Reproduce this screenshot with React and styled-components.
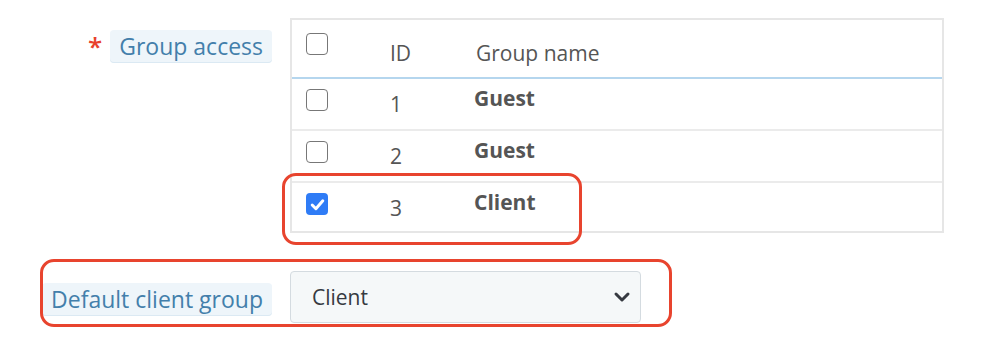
import React from "react";
import styled, { createGlobalStyle } from "styled-components";

const Global = createGlobalStyle`
  html, body { margin: 0; padding: 0; background: #ffffff; }
  body { font-family: "Open Sans", "Liberation Sans", sans-serif; }
  * { box-sizing: border-box; }
`;

const Page = styled.div`
  position: relative;
  width: 1000px;
  height: 345px;
  padding-top: 18px;
  overflow: hidden;
`;

const FormRow = styled.div`
  display: flex;
  gap: 18px;
  align-items: ${(p) => (p.$center ? "center" : "flex-start")};
  margin-top: ${(p) => p.$mt || 0}px;
`;

const LabelCol = styled.div`
  width: 272px;
  flex: none;
  display: flex;
  justify-content: flex-end;
  align-items: center;
  gap: 8px;
  padding-top: ${(p) => p.$pt || 0}px;
`;

const Required = styled.span`
  color: #e8412c;
  font-size: 26px;
  font-weight: 600;
  line-height: 26px;
  height: 22px;
  margin-top: -6px;
`;

const Label = styled.span`
  display: inline-block;
  height: 33px;
  line-height: 33px;
  padding: 0 9px;
  font-size: 23px;
  color: #437fab;
  background: #eef5fa;
  border-radius: 4px;
  box-shadow: inset 0 -1px 0 #dbe9f3;
  white-space: nowrap;
`;

const Table = styled.div`
  width: 654px;
  border: 2px solid #e6e6e6;
  background: #fff;
`;

const Row = styled.div`
  display: grid;
  grid-template-columns: 84px 84px 1fr;
  height: ${(p) => (p.$head ? 57 : p.$last ? 48 : 50)}px;
  border-bottom: ${(p) => (p.$last ? "none" : `2px solid ${p.$head ? "#b5d6ee" : "#ebebeb"}`)};
  box-sizing: content-box;
`;

const Cell = styled.div`
  padding-left: ${(p) => p.$pl || 14}px;
  padding-top: ${(p) => p.$pt}px;
  font-size: 21px;
  line-height: 29px;
  color: #555;
  font-weight: ${(p) => (p.$bold ? 700 : 400)};
  white-space: nowrap;
`;

const Box = styled.span`
  width: 22px;
  height: 22px;
  border-radius: 4px;
  border: ${(p) => (p.$checked ? "none" : "1.6px solid #777")};
  background: ${(p) => (p.$checked ? "#2f7cf6" : "#fff")};
  display: flex;
  align-items: center;
  justify-content: center;
`;

const Select = styled.div`
  width: 351px;
  height: 52px;
  border: 1px solid #d4dbe0;
  border-radius: 4px;
  background: #f5f8f9;
  display: flex;
  align-items: center;
  justify-content: space-between;
  padding: 0 8px 0 21px;
  font-size: 21px;
  color: #363a41;
`;

const Annot = styled.div`
  position: absolute;
  border: 3px solid #e8442e;
  border-radius: 14px;
  pointer-events: none;
`;

function Checkbox({ checked }) {
  return (
    <Box $checked={checked}>
      {checked && (
        <svg width="17" height="17" viewBox="0 0 16 16">
          <path d="M3 8.5 L6.5 12 L13 4.5" fill="none" stroke="#fff" strokeWidth="2.8" strokeLinecap="round" strokeLinejoin="round" />
        </svg>
      )}
    </Box>
  );
}

const rows = [
  { id: 1, name: "Guest", checked: false },
  { id: 2, name: "Guest", checked: false },
  { id: 3, name: "Client", checked: true },
];

export default function App() {
  return (
    <>
      <Global />
      <Page>
        <FormRow>
          <LabelCol $pt={12}>
            <Required>*</Required>
            <Label>Group access</Label>
          </LabelCol>
          <Table>
            <Row $head>
              <Cell $pt={13}><Checkbox /></Cell>
              <Cell $pt={19}>ID</Cell>
              <Cell $pt={19} $pl={16}>Group name</Cell>
            </Row>
            {rows.map((r, i) => (
              <Row key={r.id} $last={i === rows.length - 1}>
                <Cell $pt={10}><Checkbox checked={r.checked} /></Cell>
                <Cell $pt={11}>{r.id}</Cell>
                <Cell $pt={5} $bold>{r.name}</Cell>
              </Row>
            ))}
          </Table>
        </FormRow>
        <FormRow $center $mt={38}>
          <LabelCol $pt={5}>
            <Label>Default client group</Label>
          </LabelCol>
          <Select>
            <span>Client</span>
            <svg width="20" height="20" viewBox="0 0 20 20">
              <path d="M4 7 L10 13 L16 7" fill="none" stroke="#363a41" strokeWidth="3" strokeLinecap="round" strokeLinejoin="round" />
            </svg>
          </Select>
        </FormRow>
        <Annot style={{ left: 282, top: 173, width: 300, height: 72 }} />
        <Annot style={{ left: 40, top: 259, width: 632, height: 68 }} />
      </Page>
    </>
  );
}
